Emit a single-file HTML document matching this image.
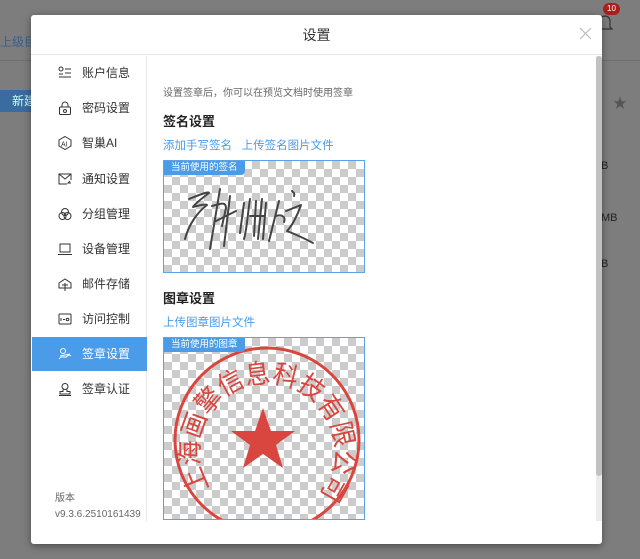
<!DOCTYPE html>
<html><head><meta charset="utf-8"><style>
*{margin:0;padding:0;box-sizing:border-box}
body{width:640px;height:559px;overflow:hidden;background:#7d7d7d;font-family:"Liberation Sans","Noto Sans CJK SC",sans-serif;position:relative}
.bg{position:absolute;color:#3c5f88;font-size:12px}
.modal{position:absolute;left:31px;top:15px;width:571px;height:529px;background:#fff;border-radius:3px;box-shadow:0 2px 8px rgba(0,0,0,.4)}
.hd{height:40px;border-bottom:1px solid #e6e6e6;text-align:center;line-height:40px;font-size:14px;color:#333}
.x{position:absolute;right:10px;top:12px}
.side{position:absolute;left:0;top:41px;width:116px;height:465px;border-right:1px solid #e8e8e8}
.it{position:absolute;left:1px;width:115px;height:34px;font-size:12px;color:#333;line-height:34px;padding-left:50px}
.it svg{position:absolute;left:26px;top:10px}
.it.on{background:#4a9be8;color:#fff}
.ver{position:absolute;left:24px;font-size:10px;color:#666;line-height:16px}
.ct{position:absolute;left:132px;top:41px;font-size:12px}
.sb{position:absolute;left:565px;top:41px;width:6px;height:465px;background:#ececec}
.sb div{width:6px;height:420px;background:#c1c1c1;border-radius:3px}
.chk{position:absolute;left:132px;width:202px;border:1px solid #5aa2ea;background-color:#fff;background-image:linear-gradient(45deg,#ccc 25%,transparent 25%,transparent 75%,#ccc 75%),linear-gradient(45deg,#ccc 25%,transparent 25%,transparent 75%,#ccc 75%);background-size:16px 16px;background-position:0 0,8px 8px;overflow:hidden}
.tag{position:absolute;left:0;top:0;background:#4a9be8;color:#fff;font-size:9.5px;padding:0 7px;height:14px;line-height:14px;border-radius:0 0 4px 0;white-space:nowrap}
.lk{color:#4a9be8}
</style></head><body>
<div class="bg" style="left:0;top:33px">上级目</div>
<div style="position:absolute;left:0;top:90px;width:31px;height:22px;background:#3b6c9f;color:#cfe;font-size:12px;line-height:22px;padding-left:12px;white-space:nowrap;overflow:hidden">新建</div>
<div style="position:absolute;left:0;top:60px;width:640px;height:1px;background:#6f6f6f"></div>
<div style="position:absolute;left:601px;top:160px;color:#222;font-size:11px">B</div>
<div style="position:absolute;left:601px;top:212px;color:#222;font-size:11px">MB</div>
<div style="position:absolute;left:601px;top:258px;color:#222;font-size:11px">B</div>
<div style="position:absolute;left:613px;top:93px;color:#555;font-size:14px">★</div>
<svg style="position:absolute;left:597px;top:12px" width="16" height="20"><path d="M3 15V9a5 5 0 0110 0v6l2 2H1z" fill="none" stroke="#333" stroke-width="1.2"/></svg>
<div style="position:absolute;left:603px;top:3px;background:#a8201a;color:#fff;font-size:8px;border-radius:7px;padding:0 4px;height:12px;line-height:12px">10</div>
<div class="modal">
<div class="hd">设置</div><svg class="x" width="13" height="13" stroke="#bbb" stroke-width="1.2"><path d="M1 1l11 11M12 1L1 12"/></svg>
<div class="side">
<div class="it" style="top:0">
<svg width="14" height="14" fill="none" stroke="#333"><circle cx="3" cy="3" r="2"/><path d="M7 3h6M7 7h6M1 11h12M1 8h4"/></svg>账户信息</div>
<div class="it" style="top:35px"><svg width="14" height="14" fill="none" stroke="#333"><path d="M4 6V4a3 3 0 016 0v2"/><rect x="1.5" y="6" width="11" height="7.5" rx="1"/><circle cx="7" cy="10" r="1.5"/></svg>密码设置</div>
<div class="it" style="top:70px"><svg width="14" height="14" fill="none" stroke="#333"><path d="M7 .5l6 3.5v6l-6 3.5-6-3.5V4z"/><text x="3" y="10.5" font-size="7" fill="#333" stroke="none">AI</text></svg>智巢AI</div>
<div class="it" style="top:106px"><svg width="14" height="14" fill="none" stroke="#333"><path d="M13 8V2H1v10h8M1 2l6 5 6-5M13 11h-3l2-2"/></svg>通知设置</div>
<div class="it" style="top:141px"><svg width="14" height="14" fill="none" stroke="#333"><circle cx="7" cy="5" r="3.5"/><circle cx="4.5" cy="9" r="3.5"/><circle cx="9.5" cy="9" r="3.5"/></svg>分组管理</div>
<div class="it" style="top:176px"><svg width="14" height="14" fill="none" stroke="#333"><rect x="2" y="2" width="10" height="8"/><path d="M0 12.5h14"/></svg>设备管理</div>
<div class="it" style="top:211px"><svg width="14" height="14" fill="none" stroke="#333"><path d="M1 6l6-4 6 4v5H1zM7 6v8M4 8h6"/></svg>邮件存储</div>
<div class="it" style="top:246px"><svg width="14" height="14" fill="none" stroke="#333"><rect x="1" y="2" width="12" height="10" rx="1"/><path d="M3 6v3M5 7.5h2"/><circle cx="9.5" cy="7.5" r="1.3"/></svg>访问控制</div>
<div class="it on" style="top:281px"><svg width="14" height="14" fill="none" stroke="#fff"><circle cx="5" cy="4" r="2.5"/><path d="M1 12c3-4 5-1 7-2s3-3 5-1M2 9l10-2"/></svg>签章设置</div>
<div class="it" style="top:316px"><svg width="14" height="14" fill="none" stroke="#333"><circle cx="7" cy="4.5" r="3"/><path d="M5 7.5v2H2v2.5h10V9.5H9v-2M1 13.5h12"/></svg>签章认证</div>
<div class="ver" style="top:435px">版本<br>v9.3.6.2510161439</div>
</div>
<div class="ct" style="top:69px;color:#666;font-size:10px">设置签章后，你可以在预览文档时使用签章</div>
<div class="ct" style="top:96px;font-size:13px;font-weight:bold;color:#222">签名设置</div>
<div class="ct lk" style="top:122px;font-size:11.5px">添加手写签名&nbsp;&nbsp; 上传签名图片文件</div>
<div class="chk" style="top:145px;height:113px">
<svg width="202" height="113" style="position:absolute;left:0;top:0" fill="none" stroke="#444" stroke-width="2" stroke-linecap="round" stroke-linejoin="round">
<path d="M25 38c10-4 20-8 20-6-8 6-15 12-16 14 7-2 13-3 14-2-8 6-18 18-22 34"/>
<path d="M56 28l-10 60M48 45c10-3 14-4 14 2l-4 18M52 60l20-10M66 35l-6 50"/>
<path d="M80 42l-4 30M86 38c-2 12-3 30-6 40M92 40l-2 35M98 38l-4 40M86 55h14M102 42l-3 36"/>
<path d="M115 40l-10 40M112 55c6-2 10 1 8 6M128 30c2 2 3 3 2 5M122 50l15-6c-4 12-10 22-14 26 5 2 15 6 26 12"/>
</svg><div class="tag">当前使用的签名</div></div>
<div class="ct" style="top:273px;font-size:13px;font-weight:bold;color:#222">图章设置</div>
<div class="ct lk" style="top:299px;font-size:11.5px">上传图章图片文件</div>
<div class="chk" style="top:322px;height:183px">
<svg width="202" height="183" style="position:absolute;left:0;top:0">
<defs><path id="arc" d="M46 150A68 68 0 1 1 160 150"/></defs>
<circle cx="103" cy="102" r="92" fill="none" stroke="#d9463f" stroke-width="3"/>
<polygon points="99,70 107,93 131,93 112,107 119,130 99,116 79,130 86,107 67,93 91,93" fill="#d9463f"/>
<text font-size="27" fill="#d9463f" font-family="Noto Sans CJK SC,sans-serif"><textPath href="#arc" textLength="300" lengthAdjust="spacingAndGlyphs">上海画擎信息科技有限公司</textPath></text>
</svg><div class="tag">当前使用的图章</div></div>
<div class="sb"><div></div></div>
</div>
</body></html>
